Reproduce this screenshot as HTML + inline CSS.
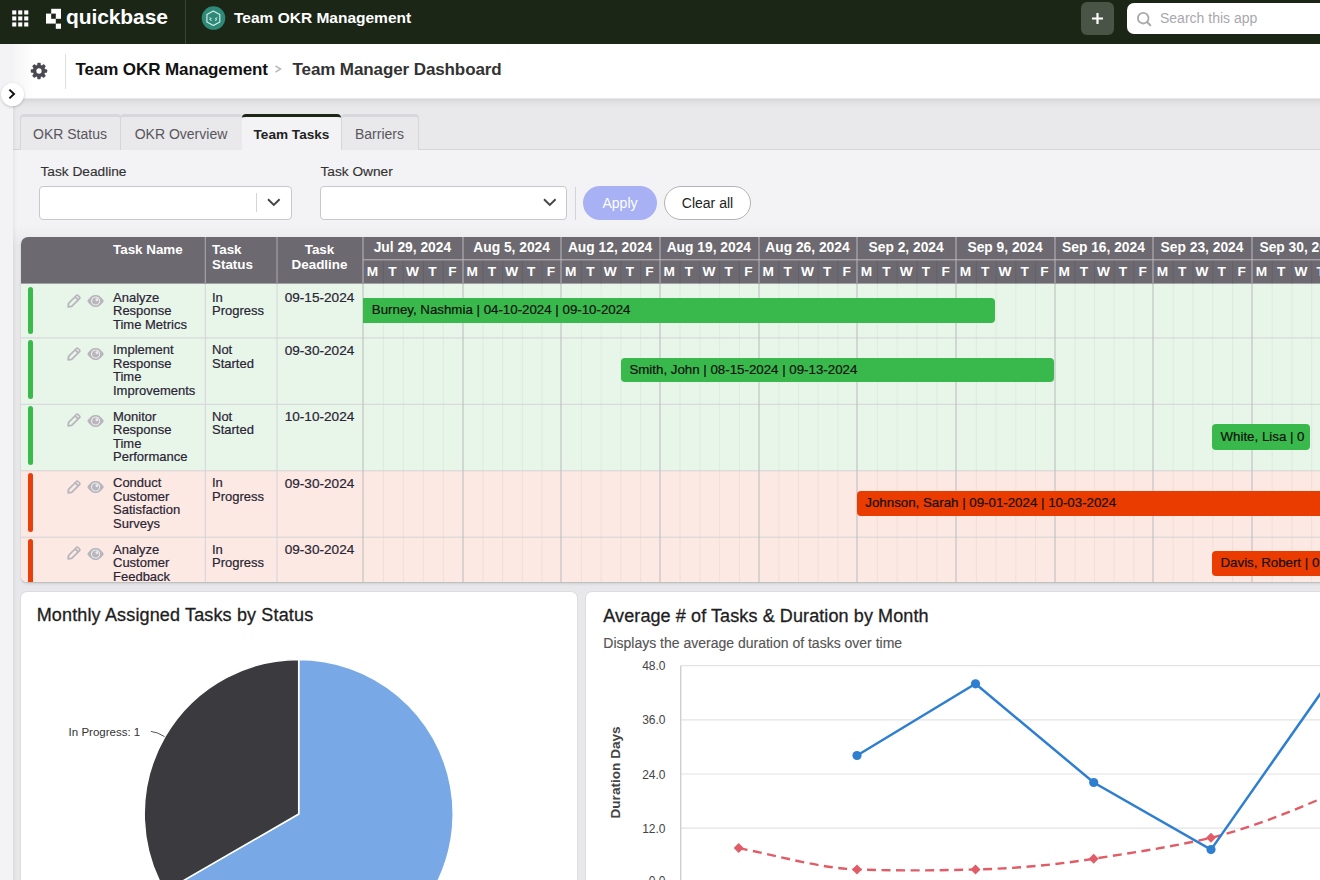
<!DOCTYPE html>
<html><head><meta charset="utf-8"><title>Team Manager Dashboard</title>
<style>
*{box-sizing:border-box}
html,body{margin:0;padding:0}
body{width:1320px;height:880px;overflow:hidden;position:relative;background:#f3f2f5;font-family:"Liberation Sans",sans-serif;color:#222}
.a{position:absolute}
.t{position:absolute;white-space:nowrap;line-height:1}
</style></head><body>

<div class="a" style="left:0;top:0;width:1320px;height:44px;background:#1c2617"></div>
<svg class="a" style="left:0;top:0" width="200" height="44" viewBox="0 0 200 44">
<rect x="12.2" y="10.4" width="4.1" height="4.1" fill="#fff"/>
<rect x="12.2" y="16.4" width="4.1" height="4.1" fill="#fff"/>
<rect x="12.2" y="22.4" width="4.1" height="4.1" fill="#fff"/>
<rect x="18.2" y="10.4" width="4.1" height="4.1" fill="#fff"/>
<rect x="18.2" y="16.4" width="4.1" height="4.1" fill="#fff"/>
<rect x="18.2" y="22.4" width="4.1" height="4.1" fill="#fff"/>
<rect x="24.2" y="10.4" width="4.1" height="4.1" fill="#fff"/>
<rect x="24.2" y="16.4" width="4.1" height="4.1" fill="#fff"/>
<rect x="24.2" y="22.4" width="4.1" height="4.1" fill="#fff"/>
<rect x="51.2" y="8.8" width="9.8" height="10" fill="#fff"/>
<rect x="46" y="13.6" width="9.8" height="10" fill="#fff"/>
<rect x="51.2" y="13.6" width="4.6" height="5.2" fill="#1c2617"/>
<rect x="55.8" y="23.6" width="5.2" height="5.2" fill="#fff"/>
</svg>
<div class="t" style="left:66px;top:6px;font-size:21px;font-weight:700;color:#fff;letter-spacing:-0.1px">quickbase</div>
<div class="a" style="left:185px;top:0;width:1px;height:44px;background:#3b4437"></div>
<svg class="a" style="left:201px;top:6px" width="25" height="25" viewBox="0 0 25 25">
<circle cx="12.5" cy="12.1" r="11.75" fill="#2e8a78"/>
<path d="M12.3 5 L18.8 8.6 L18.8 15.9 L12.3 19.5 L5.9 15.9 L5.9 8.6 Z" fill="none" stroke="#d9ede7" stroke-width="1.15" stroke-linejoin="round"/>
<path d="M8.3 11.6 L10.4 12.6 L8.6 13.5 L10.6 14.6 M16.3 11.6 L14.2 12.6 L16 13.5 L14 14.6" fill="none" stroke="#d9ede7" stroke-width="0.9"/>
</svg>
<div class="t" style="left:234px;top:10px;font-size:15.5px;font-weight:700;color:#fff">Team OKR Management</div>
<div class="a" style="left:1081px;top:2px;width:33px;height:33px;border-radius:6px;background:#4a5446"></div>
<svg class="a" style="left:1081px;top:2px" width="33" height="33" viewBox="0 0 33 33"><path d="M16.5 11 V22 M11 16.5 H22" stroke="#fff" stroke-width="2.2"/></svg>
<div class="a" style="left:1127px;top:3px;width:210px;height:31px;border-radius:7px;background:#fff"></div>
<svg class="a" style="left:1127px;top:3px" width="30" height="31" viewBox="0 0 30 31"><circle cx="16.2" cy="15.2" r="5.3" fill="none" stroke="#aaa9ae" stroke-width="1.8"/><path d="M20 19 L23.3 22.3" stroke="#aaa9ae" stroke-width="2" stroke-linecap="round"/></svg>
<div class="t" style="left:1160px;top:11px;font-size:14px;color:#a9a8ae">Search this app</div>
<div class="a" style="left:13px;top:44px;width:1307px;height:54.6px;background:#fff"></div>
<div class="a" style="left:13px;top:44px;width:22px;height:54px;background:linear-gradient(to right, rgba(0,0,0,0.045), rgba(0,0,0,0))"></div>
<svg class="a" style="left:29px;top:61px" width="20" height="20" viewBox="-10 -10 20 20"><g fill="#4b4952"><circle r="6.2"/><rect x="-1.75" y="-8.2" width="3.5" height="4.5" rx="0.9" transform="rotate(0)"/><rect x="-1.75" y="-8.2" width="3.5" height="4.5" rx="0.9" transform="rotate(45)"/><rect x="-1.75" y="-8.2" width="3.5" height="4.5" rx="0.9" transform="rotate(90)"/><rect x="-1.75" y="-8.2" width="3.5" height="4.5" rx="0.9" transform="rotate(135)"/><rect x="-1.75" y="-8.2" width="3.5" height="4.5" rx="0.9" transform="rotate(180)"/><rect x="-1.75" y="-8.2" width="3.5" height="4.5" rx="0.9" transform="rotate(225)"/><rect x="-1.75" y="-8.2" width="3.5" height="4.5" rx="0.9" transform="rotate(270)"/><rect x="-1.75" y="-8.2" width="3.5" height="4.5" rx="0.9" transform="rotate(315)"/></g><circle r="2.65" fill="#fff"/></svg>
<div class="a" style="left:65px;top:54px;width:1px;height:35px;background:#dedde0"></div>
<div class="t" style="left:75.5px;top:60.7px;font-size:17px;font-weight:700;color:#111;letter-spacing:-0.1px">Team OKR Management</div>
<svg class="a" style="left:274px;top:64px" width="10" height="10" viewBox="0 0 10 10"><path d="M1.5 1.8 L6.5 5 L1.5 8.2" fill="none" stroke="#b9b8bc" stroke-width="1.6"/></svg>
<div class="t" style="left:292.5px;top:60.7px;font-size:17px;font-weight:700;color:#333;letter-spacing:-0.1px">Team Manager Dashboard</div>
<div class="a" style="left:13px;top:98px;width:1307px;height:52px;background:#e9e8eb;border-bottom:1px solid #d6d5d9"></div>
<div class="a" style="left:13px;top:98.6px;width:1307px;height:9px;background:linear-gradient(to bottom,rgba(0,0,0,0.085),rgba(0,0,0,0.03) 40%,rgba(0,0,0,0))"></div>
<div class="a" style="left:20px;top:114px;width:101px;height:35.5px;background:#e9e8eb;border:1px solid #d6d5d9;border-bottom:none;border-top:3.5px solid #d8d7db;border-radius:4px 4px 0 0"></div>
<div class="t" style="left:20px;width:100px;text-align:center;top:126.5px;font-size:14px;color:#58565c">OKR Status</div>
<div class="a" style="left:120px;top:114px;width:123px;height:35.5px;background:#e9e8eb;border:1px solid #d6d5d9;border-bottom:none;border-top:3.5px solid #d8d7db;border-radius:4px 4px 0 0"></div>
<div class="t" style="left:120px;width:122px;text-align:center;top:126.5px;font-size:14px;color:#58565c">OKR Overview</div>
<div class="a" style="left:242px;top:114px;width:99px;height:36px;background:#f3f2f5;border-top:3.5px solid #1c2616;border-radius:4px 4px 0 0"></div>
<div class="t" style="left:242px;width:99px;text-align:center;top:127.5px;font-size:13.6px;font-weight:700;color:#222">Team Tasks</div>
<div class="a" style="left:341px;top:114px;width:78px;height:35.5px;background:#e9e8eb;border:1px solid #d6d5d9;border-bottom:none;border-top:3.5px solid #d8d7db;border-radius:4px 4px 0 0"></div>
<div class="t" style="left:341px;width:77px;text-align:center;top:126.5px;font-size:14px;color:#58565c">Barriers</div>
<div class="a" style="left:13px;top:150px;width:1307px;height:86px;background:#f3f2f5"></div>
<div class="t" style="left:40.5px;top:165px;font-size:13.7px;color:#333;-webkit-text-stroke:0.15px #333">Task Deadline</div>
<div class="t" style="left:320.5px;top:165px;font-size:13.7px;color:#333;-webkit-text-stroke:0.15px #333">Task Owner</div>
<div class="a" style="left:39px;top:186px;width:253px;height:34px;background:#fff;border:1px solid #c8c7cc;border-radius:4px"></div>
<div class="a" style="left:256px;top:193px;width:1px;height:19px;background:#d4d3d7"></div>
<svg class="a" style="left:266px;top:197px" width="16" height="10" viewBox="0 0 16 10"><path d="M2 2.3 L7.8 8 L13.6 2.3" fill="none" stroke="#444" stroke-width="1.9"/></svg>
<div class="a" style="left:320px;top:186px;width:247px;height:34px;background:#fff;border:1px solid #c8c7cc;border-radius:4px"></div>
<svg class="a" style="left:541.5px;top:197px" width="16" height="10" viewBox="0 0 16 10"><path d="M2 2.3 L7.8 8 L13.6 2.3" fill="none" stroke="#444" stroke-width="1.9"/></svg>
<div class="a" style="left:575px;top:187px;width:1px;height:33px;background:#d4d3d7"></div>
<div class="a" style="left:583px;top:186px;width:74px;height:34px;background:#a7b1f3;border-radius:17px"></div>
<div class="t" style="left:583px;width:74px;text-align:center;top:195.5px;font-size:14px;color:#fff">Apply</div>
<div class="a" style="left:664px;top:186px;width:87px;height:34px;background:#fff;border:1px solid #b3b3b6;border-radius:17px"></div>
<div class="t" style="left:664px;width:87px;text-align:center;top:195.5px;font-size:14px;color:#222">Clear all</div>
<div class="a" style="left:13px;top:224px;width:1307px;height:656px;background:linear-gradient(to bottom,#f3f2f5 0px,#eeedf0 12px,#e8e7ea 22px,#e8e7ea 100%)"></div>
<div class="a" style="left:13px;top:98px;width:4px;height:782px;background:linear-gradient(to right,rgba(0,0,0,0.05),rgba(0,0,0,0))"></div>
<div class="a" style="left:20.5px;top:236.5px;width:1320px;height:345.5px;overflow:hidden;border-radius:7px 0 0 6px;box-shadow:0 1px 1px rgba(0,0,0,0.10), 0 2px 3px rgba(0,0,0,0.10);background:#fff">
<div class="a" style="left:0;top:0;width:1320px;height:46.7px;background:#6c6970"></div>
<div class="a" style="left:0;top:46.7px;width:1320px;height:54.7px;background:#e8f6ea"></div>
<div class="a" style="left:0;top:100.9px;width:1320px;height:66.9px;background:#e8f6ea"></div>
<div class="a" style="left:0;top:167.3px;width:1320px;height:67px;background:#e8f6ea"></div>
<div class="a" style="left:0;top:233.8px;width:1320px;height:66.9px;background:#fde9e3"></div>
<div class="a" style="left:0;top:300.2px;width:1320px;height:54.3px;background:#fde9e3"></div>
<svg class="a" style="left:0;top:0" width="1320" height="346" viewBox="20.5 236.5 1320 346"><rect x="382.34" y="283.2" width="1" height="320" fill="rgba(90,100,95,0.075)"/><rect x="402.33" y="283.2" width="1" height="320" fill="rgba(90,100,95,0.075)"/><rect x="422.32" y="283.2" width="1" height="320" fill="rgba(90,100,95,0.075)"/><rect x="442.31" y="283.2" width="1" height="320" fill="rgba(90,100,95,0.075)"/><rect x="481.98" y="283.2" width="1" height="320" fill="rgba(90,100,95,0.075)"/><rect x="501.66" y="283.2" width="1" height="320" fill="rgba(90,100,95,0.075)"/><rect x="521.34" y="283.2" width="1" height="320" fill="rgba(90,100,95,0.075)"/><rect x="541.02" y="283.2" width="1" height="320" fill="rgba(90,100,95,0.075)"/><rect x="580.42" y="283.2" width="1" height="320" fill="rgba(90,100,95,0.075)"/><rect x="600.14" y="283.2" width="1" height="320" fill="rgba(90,100,95,0.075)"/><rect x="619.86" y="283.2" width="1" height="320" fill="rgba(90,100,95,0.075)"/><rect x="639.58" y="283.2" width="1" height="320" fill="rgba(90,100,95,0.075)"/><rect x="679.08" y="283.2" width="1" height="320" fill="rgba(90,100,95,0.075)"/><rect x="698.86" y="283.2" width="1" height="320" fill="rgba(90,100,95,0.075)"/><rect x="718.64" y="283.2" width="1" height="320" fill="rgba(90,100,95,0.075)"/><rect x="738.42" y="283.2" width="1" height="320" fill="rgba(90,100,95,0.075)"/><rect x="777.86" y="283.2" width="1" height="320" fill="rgba(90,100,95,0.075)"/><rect x="797.52" y="283.2" width="1" height="320" fill="rgba(90,100,95,0.075)"/><rect x="817.18" y="283.2" width="1" height="320" fill="rgba(90,100,95,0.075)"/><rect x="836.84" y="283.2" width="1" height="320" fill="rgba(90,100,95,0.075)"/><rect x="876.32" y="283.2" width="1" height="320" fill="rgba(90,100,95,0.075)"/><rect x="896.14" y="283.2" width="1" height="320" fill="rgba(90,100,95,0.075)"/><rect x="915.96" y="283.2" width="1" height="320" fill="rgba(90,100,95,0.075)"/><rect x="935.78" y="283.2" width="1" height="320" fill="rgba(90,100,95,0.075)"/><rect x="975.34" y="283.2" width="1" height="320" fill="rgba(90,100,95,0.075)"/><rect x="995.08" y="283.2" width="1" height="320" fill="rgba(90,100,95,0.075)"/><rect x="1014.82" y="283.2" width="1" height="320" fill="rgba(90,100,95,0.075)"/><rect x="1034.56" y="283.2" width="1" height="320" fill="rgba(90,100,95,0.075)"/><rect x="1073.92" y="283.2" width="1" height="320" fill="rgba(90,100,95,0.075)"/><rect x="1093.54" y="283.2" width="1" height="320" fill="rgba(90,100,95,0.075)"/><rect x="1113.16" y="283.2" width="1" height="320" fill="rgba(90,100,95,0.075)"/><rect x="1132.78" y="283.2" width="1" height="320" fill="rgba(90,100,95,0.075)"/><rect x="1172.2" y="283.2" width="1" height="320" fill="rgba(90,100,95,0.075)"/><rect x="1192" y="283.2" width="1" height="320" fill="rgba(90,100,95,0.075)"/><rect x="1211.8" y="283.2" width="1" height="320" fill="rgba(90,100,95,0.075)"/><rect x="1231.6" y="283.2" width="1" height="320" fill="rgba(90,100,95,0.075)"/><rect x="1271.16" y="283.2" width="1" height="320" fill="rgba(90,100,95,0.075)"/><rect x="1290.92" y="283.2" width="1" height="320" fill="rgba(90,100,95,0.075)"/><rect x="1310.68" y="283.2" width="1" height="320" fill="rgba(90,100,95,0.075)"/><rect x="1330.44" y="283.2" width="1" height="320" fill="rgba(90,100,95,0.075)"/><rect x="20.5" y="336.9" width="1320" height="1" fill="#d4d3d7"/><rect x="20.5" y="403.3" width="1320" height="1" fill="#d4d3d7"/><rect x="20.5" y="469.8" width="1320" height="1" fill="#d4d3d7"/><rect x="20.5" y="536.2" width="1320" height="1" fill="#d4d3d7"/><rect x="20.5" y="590" width="1320" height="1" fill="#d4d3d7"/><rect x="362" y="283.2" width="1" height="320" fill="#bab9bd"/><rect x="462" y="283.2" width="1" height="320" fill="#bab9bd"/><rect x="560" y="283.2" width="1" height="320" fill="#bab9bd"/><rect x="659" y="283.2" width="1" height="320" fill="#bab9bd"/><rect x="758" y="283.2" width="1" height="320" fill="#bab9bd"/><rect x="856" y="283.2" width="1" height="320" fill="#bab9bd"/><rect x="955" y="283.2" width="1" height="320" fill="#bab9bd"/><rect x="1054" y="283.2" width="1" height="320" fill="#bab9bd"/><rect x="1152" y="283.2" width="1" height="320" fill="#bab9bd"/><rect x="1251" y="283.2" width="1" height="320" fill="#bab9bd"/><rect x="1350" y="283.2" width="1" height="320" fill="#bab9bd"/><rect x="204.3" y="283.2" width="1" height="320" fill="#d4d3d7"/><rect x="276" y="283.2" width="1" height="320" fill="#d4d3d7"/><rect x="204.25" y="236.5" width="1.1" height="46.7" fill="#a9a7ad"/><rect x="275.95" y="236.5" width="1.1" height="46.7" fill="#a9a7ad"/><rect x="362" y="236.5" width="1" height="46.7" fill="#b9b7bd"/><rect x="382.34" y="259.9" width="1" height="23.3" fill="#646168"/><rect x="402.33" y="259.9" width="1" height="23.3" fill="#646168"/><rect x="422.32" y="259.9" width="1" height="23.3" fill="#646168"/><rect x="442.31" y="259.9" width="1" height="23.3" fill="#646168"/><rect x="462" y="236.5" width="1" height="46.7" fill="#b9b7bd"/><rect x="481.98" y="259.9" width="1" height="23.3" fill="#646168"/><rect x="501.66" y="259.9" width="1" height="23.3" fill="#646168"/><rect x="521.34" y="259.9" width="1" height="23.3" fill="#646168"/><rect x="541.02" y="259.9" width="1" height="23.3" fill="#646168"/><rect x="560" y="236.5" width="1" height="46.7" fill="#b9b7bd"/><rect x="580.42" y="259.9" width="1" height="23.3" fill="#646168"/><rect x="600.14" y="259.9" width="1" height="23.3" fill="#646168"/><rect x="619.86" y="259.9" width="1" height="23.3" fill="#646168"/><rect x="639.58" y="259.9" width="1" height="23.3" fill="#646168"/><rect x="659" y="236.5" width="1" height="46.7" fill="#b9b7bd"/><rect x="679.08" y="259.9" width="1" height="23.3" fill="#646168"/><rect x="698.86" y="259.9" width="1" height="23.3" fill="#646168"/><rect x="718.64" y="259.9" width="1" height="23.3" fill="#646168"/><rect x="738.42" y="259.9" width="1" height="23.3" fill="#646168"/><rect x="758" y="236.5" width="1" height="46.7" fill="#b9b7bd"/><rect x="777.86" y="259.9" width="1" height="23.3" fill="#646168"/><rect x="797.52" y="259.9" width="1" height="23.3" fill="#646168"/><rect x="817.18" y="259.9" width="1" height="23.3" fill="#646168"/><rect x="836.84" y="259.9" width="1" height="23.3" fill="#646168"/><rect x="856" y="236.5" width="1" height="46.7" fill="#b9b7bd"/><rect x="876.32" y="259.9" width="1" height="23.3" fill="#646168"/><rect x="896.14" y="259.9" width="1" height="23.3" fill="#646168"/><rect x="915.96" y="259.9" width="1" height="23.3" fill="#646168"/><rect x="935.78" y="259.9" width="1" height="23.3" fill="#646168"/><rect x="955" y="236.5" width="1" height="46.7" fill="#b9b7bd"/><rect x="975.34" y="259.9" width="1" height="23.3" fill="#646168"/><rect x="995.08" y="259.9" width="1" height="23.3" fill="#646168"/><rect x="1014.82" y="259.9" width="1" height="23.3" fill="#646168"/><rect x="1034.56" y="259.9" width="1" height="23.3" fill="#646168"/><rect x="1054" y="236.5" width="1" height="46.7" fill="#b9b7bd"/><rect x="1073.92" y="259.9" width="1" height="23.3" fill="#646168"/><rect x="1093.54" y="259.9" width="1" height="23.3" fill="#646168"/><rect x="1113.16" y="259.9" width="1" height="23.3" fill="#646168"/><rect x="1132.78" y="259.9" width="1" height="23.3" fill="#646168"/><rect x="1152" y="236.5" width="1" height="46.7" fill="#b9b7bd"/><rect x="1172.2" y="259.9" width="1" height="23.3" fill="#646168"/><rect x="1192" y="259.9" width="1" height="23.3" fill="#646168"/><rect x="1211.8" y="259.9" width="1" height="23.3" fill="#646168"/><rect x="1231.6" y="259.9" width="1" height="23.3" fill="#646168"/><rect x="1251" y="236.5" width="1" height="46.7" fill="#b9b7bd"/><rect x="1271.16" y="259.9" width="1" height="23.3" fill="#646168"/><rect x="1290.92" y="259.9" width="1" height="23.3" fill="#646168"/><rect x="1310.68" y="259.9" width="1" height="23.3" fill="#646168"/><rect x="1330.44" y="259.9" width="1" height="23.3" fill="#646168"/><rect x="362.5" y="258.8" width="1000" height="1" fill="#b9b7bd"/><rect x="20.5" y="282.6" width="1320" height="0.8" fill="#8f8d94"/></svg>
<div class="t" style="left:341.95px;width:99.95px;text-align:center;top:4.6px;font-size:13.8px;font-weight:700;color:#fff">Jul 29, 2024</div>
<div class="t" style="left:341.95px;width:19.99px;text-align:center;top:28.6px;font-size:13.7px;font-weight:700;color:#fff">M</div>
<div class="t" style="left:361.94px;width:19.99px;text-align:center;top:28.6px;font-size:13.7px;font-weight:700;color:#fff">T</div>
<div class="t" style="left:381.93px;width:19.99px;text-align:center;top:28.6px;font-size:13.7px;font-weight:700;color:#fff">W</div>
<div class="t" style="left:401.92px;width:19.99px;text-align:center;top:28.6px;font-size:13.7px;font-weight:700;color:#fff">T</div>
<div class="t" style="left:421.91px;width:19.99px;text-align:center;top:28.6px;font-size:13.7px;font-weight:700;color:#fff">F</div>
<div class="t" style="left:441.9px;width:98.4px;text-align:center;top:4.6px;font-size:13.8px;font-weight:700;color:#fff">Aug 5, 2024</div>
<div class="t" style="left:441.9px;width:19.68px;text-align:center;top:28.6px;font-size:13.7px;font-weight:700;color:#fff">M</div>
<div class="t" style="left:461.58px;width:19.68px;text-align:center;top:28.6px;font-size:13.7px;font-weight:700;color:#fff">T</div>
<div class="t" style="left:481.26px;width:19.68px;text-align:center;top:28.6px;font-size:13.7px;font-weight:700;color:#fff">W</div>
<div class="t" style="left:500.94px;width:19.68px;text-align:center;top:28.6px;font-size:13.7px;font-weight:700;color:#fff">T</div>
<div class="t" style="left:520.62px;width:19.68px;text-align:center;top:28.6px;font-size:13.7px;font-weight:700;color:#fff">F</div>
<div class="t" style="left:540.3px;width:98.6px;text-align:center;top:4.6px;font-size:13.8px;font-weight:700;color:#fff">Aug 12, 2024</div>
<div class="t" style="left:540.3px;width:19.72px;text-align:center;top:28.6px;font-size:13.7px;font-weight:700;color:#fff">M</div>
<div class="t" style="left:560.02px;width:19.72px;text-align:center;top:28.6px;font-size:13.7px;font-weight:700;color:#fff">T</div>
<div class="t" style="left:579.74px;width:19.72px;text-align:center;top:28.6px;font-size:13.7px;font-weight:700;color:#fff">W</div>
<div class="t" style="left:599.46px;width:19.72px;text-align:center;top:28.6px;font-size:13.7px;font-weight:700;color:#fff">T</div>
<div class="t" style="left:619.18px;width:19.72px;text-align:center;top:28.6px;font-size:13.7px;font-weight:700;color:#fff">F</div>
<div class="t" style="left:638.9px;width:98.9px;text-align:center;top:4.6px;font-size:13.8px;font-weight:700;color:#fff">Aug 19, 2024</div>
<div class="t" style="left:638.9px;width:19.78px;text-align:center;top:28.6px;font-size:13.7px;font-weight:700;color:#fff">M</div>
<div class="t" style="left:658.68px;width:19.78px;text-align:center;top:28.6px;font-size:13.7px;font-weight:700;color:#fff">T</div>
<div class="t" style="left:678.46px;width:19.78px;text-align:center;top:28.6px;font-size:13.7px;font-weight:700;color:#fff">W</div>
<div class="t" style="left:698.24px;width:19.78px;text-align:center;top:28.6px;font-size:13.7px;font-weight:700;color:#fff">T</div>
<div class="t" style="left:718.02px;width:19.78px;text-align:center;top:28.6px;font-size:13.7px;font-weight:700;color:#fff">F</div>
<div class="t" style="left:737.8px;width:98.3px;text-align:center;top:4.6px;font-size:13.8px;font-weight:700;color:#fff">Aug 26, 2024</div>
<div class="t" style="left:737.8px;width:19.66px;text-align:center;top:28.6px;font-size:13.7px;font-weight:700;color:#fff">M</div>
<div class="t" style="left:757.46px;width:19.66px;text-align:center;top:28.6px;font-size:13.7px;font-weight:700;color:#fff">T</div>
<div class="t" style="left:777.12px;width:19.66px;text-align:center;top:28.6px;font-size:13.7px;font-weight:700;color:#fff">W</div>
<div class="t" style="left:796.78px;width:19.66px;text-align:center;top:28.6px;font-size:13.7px;font-weight:700;color:#fff">T</div>
<div class="t" style="left:816.44px;width:19.66px;text-align:center;top:28.6px;font-size:13.7px;font-weight:700;color:#fff">F</div>
<div class="t" style="left:836.1px;width:99.1px;text-align:center;top:4.6px;font-size:13.8px;font-weight:700;color:#fff">Sep 2, 2024</div>
<div class="t" style="left:836.1px;width:19.82px;text-align:center;top:28.6px;font-size:13.7px;font-weight:700;color:#fff">M</div>
<div class="t" style="left:855.92px;width:19.82px;text-align:center;top:28.6px;font-size:13.7px;font-weight:700;color:#fff">T</div>
<div class="t" style="left:875.74px;width:19.82px;text-align:center;top:28.6px;font-size:13.7px;font-weight:700;color:#fff">W</div>
<div class="t" style="left:895.56px;width:19.82px;text-align:center;top:28.6px;font-size:13.7px;font-weight:700;color:#fff">T</div>
<div class="t" style="left:915.38px;width:19.82px;text-align:center;top:28.6px;font-size:13.7px;font-weight:700;color:#fff">F</div>
<div class="t" style="left:935.2px;width:98.7px;text-align:center;top:4.6px;font-size:13.8px;font-weight:700;color:#fff">Sep 9, 2024</div>
<div class="t" style="left:935.2px;width:19.74px;text-align:center;top:28.6px;font-size:13.7px;font-weight:700;color:#fff">M</div>
<div class="t" style="left:954.94px;width:19.74px;text-align:center;top:28.6px;font-size:13.7px;font-weight:700;color:#fff">T</div>
<div class="t" style="left:974.68px;width:19.74px;text-align:center;top:28.6px;font-size:13.7px;font-weight:700;color:#fff">W</div>
<div class="t" style="left:994.42px;width:19.74px;text-align:center;top:28.6px;font-size:13.7px;font-weight:700;color:#fff">T</div>
<div class="t" style="left:1014.16px;width:19.74px;text-align:center;top:28.6px;font-size:13.7px;font-weight:700;color:#fff">F</div>
<div class="t" style="left:1033.9px;width:98.1px;text-align:center;top:4.6px;font-size:13.8px;font-weight:700;color:#fff">Sep 16, 2024</div>
<div class="t" style="left:1033.9px;width:19.62px;text-align:center;top:28.6px;font-size:13.7px;font-weight:700;color:#fff">M</div>
<div class="t" style="left:1053.52px;width:19.62px;text-align:center;top:28.6px;font-size:13.7px;font-weight:700;color:#fff">T</div>
<div class="t" style="left:1073.14px;width:19.62px;text-align:center;top:28.6px;font-size:13.7px;font-weight:700;color:#fff">W</div>
<div class="t" style="left:1092.76px;width:19.62px;text-align:center;top:28.6px;font-size:13.7px;font-weight:700;color:#fff">T</div>
<div class="t" style="left:1112.38px;width:19.62px;text-align:center;top:28.6px;font-size:13.7px;font-weight:700;color:#fff">F</div>
<div class="t" style="left:1132px;width:99px;text-align:center;top:4.6px;font-size:13.8px;font-weight:700;color:#fff">Sep 23, 2024</div>
<div class="t" style="left:1132px;width:19.8px;text-align:center;top:28.6px;font-size:13.7px;font-weight:700;color:#fff">M</div>
<div class="t" style="left:1151.8px;width:19.8px;text-align:center;top:28.6px;font-size:13.7px;font-weight:700;color:#fff">T</div>
<div class="t" style="left:1171.6px;width:19.8px;text-align:center;top:28.6px;font-size:13.7px;font-weight:700;color:#fff">W</div>
<div class="t" style="left:1191.4px;width:19.8px;text-align:center;top:28.6px;font-size:13.7px;font-weight:700;color:#fff">T</div>
<div class="t" style="left:1211.2px;width:19.8px;text-align:center;top:28.6px;font-size:13.7px;font-weight:700;color:#fff">F</div>
<div class="t" style="left:1231px;width:98.8px;text-align:center;top:4.6px;font-size:13.8px;font-weight:700;color:#fff">Sep 30, 2024</div>
<div class="t" style="left:1231px;width:19.76px;text-align:center;top:28.6px;font-size:13.7px;font-weight:700;color:#fff">M</div>
<div class="t" style="left:1250.76px;width:19.76px;text-align:center;top:28.6px;font-size:13.7px;font-weight:700;color:#fff">T</div>
<div class="t" style="left:1270.52px;width:19.76px;text-align:center;top:28.6px;font-size:13.7px;font-weight:700;color:#fff">W</div>
<div class="t" style="left:1290.28px;width:19.76px;text-align:center;top:28.6px;font-size:13.7px;font-weight:700;color:#fff">T</div>
<div class="t" style="left:1310.04px;width:19.76px;text-align:center;top:28.6px;font-size:13.7px;font-weight:700;color:#fff">F</div>
<div class="t" style="left:92.5px;top:6.2px;font-size:13.4px;font-weight:700;color:#fff">Task Name</div>
<div class="t" style="left:191.5px;top:5.5px;font-size:13.4px;font-weight:700;color:#fff;line-height:15px;white-space:normal">Task<br>Status</div>
<div class="t" style="left:256px;width:86px;text-align:center;top:5.5px;font-size:13.4px;font-weight:700;color:#fff;line-height:15px;white-space:normal">Task<br>Deadline</div>
<div class="a" style="left:7.5px;top:50.2px;width:5.2px;height:46.9px;border-radius:2.6px;background:#3bba4c"></div>
<svg class="a" style="left:46.6px;top:57.6px" width="14" height="14" viewBox="0 0 14 14"><path d="M1.1 12.9 L1.6 9.3 L9.4 1.5 Q10.2 0.8 11 1.5 L12.5 3 Q13.2 3.8 12.5 4.6 L4.7 12.4 Z M8.1 2.8 L11.2 5.9" fill="none" stroke="#b8b6bc" stroke-width="1.75" stroke-linejoin="round"/></svg>
<svg class="a" style="left:66.8px;top:58.8px" width="17.2" height="12" viewBox="0 0 17.2 12"><path d="M0.3 6 C3.4 1 6 0 8.6 0 C11.2 0 13.8 1 16.9 6 C13.8 11 11.2 12 8.6 12 C6 12 3.4 11 0.3 6 Z" fill="#b8b6bc"/><circle cx="8.6" cy="6" r="4.05" fill="none" stroke="rgba(255,255,255,0.72)" stroke-width="1.1"/><circle cx="8.6" cy="6.1" r="2.75" fill="#b8b6bc"/><circle cx="9.9" cy="4.8" r="1.45" fill="rgba(255,255,255,0.72)"/></svg>
<div class="t" style="left:92.5px;top:54px;font-size:13px;line-height:13.5px;color:#2a2434;-webkit-text-stroke:0.2px #2a2434;white-space:normal">Analyze<br>Response<br>Time Metrics</div>
<div class="t" style="left:191.5px;top:54px;font-size:13px;line-height:13.5px;color:#2a2434;-webkit-text-stroke:0.2px #2a2434;white-space:normal">In<br>Progress</div>
<div class="t" style="left:256px;width:86px;text-align:center;top:54.2px;font-size:13.6px;line-height:13.5px;color:#2a2434;-webkit-text-stroke:0.2px #2a2434">09-15-2024</div>
<div class="a" style="left:7.5px;top:103.1px;width:5.2px;height:59.1px;border-radius:2.6px;background:#3bba4c"></div>
<svg class="a" style="left:46.6px;top:110.5px" width="14" height="14" viewBox="0 0 14 14"><path d="M1.1 12.9 L1.6 9.3 L9.4 1.5 Q10.2 0.8 11 1.5 L12.5 3 Q13.2 3.8 12.5 4.6 L4.7 12.4 Z M8.1 2.8 L11.2 5.9" fill="none" stroke="#b8b6bc" stroke-width="1.75" stroke-linejoin="round"/></svg>
<svg class="a" style="left:66.8px;top:111.7px" width="17.2" height="12" viewBox="0 0 17.2 12"><path d="M0.3 6 C3.4 1 6 0 8.6 0 C11.2 0 13.8 1 16.9 6 C13.8 11 11.2 12 8.6 12 C6 12 3.4 11 0.3 6 Z" fill="#b8b6bc"/><circle cx="8.6" cy="6" r="4.05" fill="none" stroke="rgba(255,255,255,0.72)" stroke-width="1.1"/><circle cx="8.6" cy="6.1" r="2.75" fill="#b8b6bc"/><circle cx="9.9" cy="4.8" r="1.45" fill="rgba(255,255,255,0.72)"/></svg>
<div class="t" style="left:92.5px;top:106.9px;font-size:13px;line-height:13.5px;color:#2a2434;-webkit-text-stroke:0.2px #2a2434;white-space:normal">Implement<br>Response<br>Time<br>Improvements</div>
<div class="t" style="left:191.5px;top:106.9px;font-size:13px;line-height:13.5px;color:#2a2434;-webkit-text-stroke:0.2px #2a2434;white-space:normal">Not<br>Started</div>
<div class="t" style="left:256px;width:86px;text-align:center;top:107.1px;font-size:13.6px;line-height:13.5px;color:#2a2434;-webkit-text-stroke:0.2px #2a2434">09-30-2024</div>
<div class="a" style="left:7.5px;top:169.5px;width:5.2px;height:59.2px;border-radius:2.6px;background:#3bba4c"></div>
<svg class="a" style="left:46.6px;top:176.9px" width="14" height="14" viewBox="0 0 14 14"><path d="M1.1 12.9 L1.6 9.3 L9.4 1.5 Q10.2 0.8 11 1.5 L12.5 3 Q13.2 3.8 12.5 4.6 L4.7 12.4 Z M8.1 2.8 L11.2 5.9" fill="none" stroke="#b8b6bc" stroke-width="1.75" stroke-linejoin="round"/></svg>
<svg class="a" style="left:66.8px;top:178.1px" width="17.2" height="12" viewBox="0 0 17.2 12"><path d="M0.3 6 C3.4 1 6 0 8.6 0 C11.2 0 13.8 1 16.9 6 C13.8 11 11.2 12 8.6 12 C6 12 3.4 11 0.3 6 Z" fill="#b8b6bc"/><circle cx="8.6" cy="6" r="4.05" fill="none" stroke="rgba(255,255,255,0.72)" stroke-width="1.1"/><circle cx="8.6" cy="6.1" r="2.75" fill="#b8b6bc"/><circle cx="9.9" cy="4.8" r="1.45" fill="rgba(255,255,255,0.72)"/></svg>
<div class="t" style="left:92.5px;top:173.3px;font-size:13px;line-height:13.5px;color:#2a2434;-webkit-text-stroke:0.2px #2a2434;white-space:normal">Monitor<br>Response<br>Time<br>Performance</div>
<div class="t" style="left:191.5px;top:173.3px;font-size:13px;line-height:13.5px;color:#2a2434;-webkit-text-stroke:0.2px #2a2434;white-space:normal">Not<br>Started</div>
<div class="t" style="left:256px;width:86px;text-align:center;top:173.5px;font-size:13.6px;line-height:13.5px;color:#2a2434;-webkit-text-stroke:0.2px #2a2434">10-10-2024</div>
<div class="a" style="left:7.5px;top:236px;width:5.2px;height:59.1px;border-radius:2.6px;background:#ea3f0b"></div>
<svg class="a" style="left:46.6px;top:243.4px" width="14" height="14" viewBox="0 0 14 14"><path d="M1.1 12.9 L1.6 9.3 L9.4 1.5 Q10.2 0.8 11 1.5 L12.5 3 Q13.2 3.8 12.5 4.6 L4.7 12.4 Z M8.1 2.8 L11.2 5.9" fill="none" stroke="#b8b6bc" stroke-width="1.75" stroke-linejoin="round"/></svg>
<svg class="a" style="left:66.8px;top:244.6px" width="17.2" height="12" viewBox="0 0 17.2 12"><path d="M0.3 6 C3.4 1 6 0 8.6 0 C11.2 0 13.8 1 16.9 6 C13.8 11 11.2 12 8.6 12 C6 12 3.4 11 0.3 6 Z" fill="#b8b6bc"/><circle cx="8.6" cy="6" r="4.05" fill="none" stroke="rgba(255,255,255,0.72)" stroke-width="1.1"/><circle cx="8.6" cy="6.1" r="2.75" fill="#b8b6bc"/><circle cx="9.9" cy="4.8" r="1.45" fill="rgba(255,255,255,0.72)"/></svg>
<div class="t" style="left:92.5px;top:239.8px;font-size:13px;line-height:13.5px;color:#2a2434;-webkit-text-stroke:0.2px #2a2434;white-space:normal">Conduct<br>Customer<br>Satisfaction<br>Surveys</div>
<div class="t" style="left:191.5px;top:239.8px;font-size:13px;line-height:13.5px;color:#2a2434;-webkit-text-stroke:0.2px #2a2434;white-space:normal">In<br>Progress</div>
<div class="t" style="left:256px;width:86px;text-align:center;top:240px;font-size:13.6px;line-height:13.5px;color:#2a2434;-webkit-text-stroke:0.2px #2a2434">09-30-2024</div>
<div class="a" style="left:7.5px;top:302.4px;width:5.2px;height:46.5px;border-radius:2.6px;background:#ea3f0b"></div>
<svg class="a" style="left:46.6px;top:309.8px" width="14" height="14" viewBox="0 0 14 14"><path d="M1.1 12.9 L1.6 9.3 L9.4 1.5 Q10.2 0.8 11 1.5 L12.5 3 Q13.2 3.8 12.5 4.6 L4.7 12.4 Z M8.1 2.8 L11.2 5.9" fill="none" stroke="#b8b6bc" stroke-width="1.75" stroke-linejoin="round"/></svg>
<svg class="a" style="left:66.8px;top:311px" width="17.2" height="12" viewBox="0 0 17.2 12"><path d="M0.3 6 C3.4 1 6 0 8.6 0 C11.2 0 13.8 1 16.9 6 C13.8 11 11.2 12 8.6 12 C6 12 3.4 11 0.3 6 Z" fill="#b8b6bc"/><circle cx="8.6" cy="6" r="4.05" fill="none" stroke="rgba(255,255,255,0.72)" stroke-width="1.1"/><circle cx="8.6" cy="6.1" r="2.75" fill="#b8b6bc"/><circle cx="9.9" cy="4.8" r="1.45" fill="rgba(255,255,255,0.72)"/></svg>
<div class="t" style="left:92.5px;top:306.2px;font-size:13px;line-height:13.5px;color:#2a2434;-webkit-text-stroke:0.2px #2a2434;white-space:normal">Analyze<br>Customer<br>Feedback</div>
<div class="t" style="left:191.5px;top:306.2px;font-size:13px;line-height:13.5px;color:#2a2434;-webkit-text-stroke:0.2px #2a2434;white-space:normal">In<br>Progress</div>
<div class="t" style="left:256px;width:86px;text-align:center;top:306.4px;font-size:13.6px;line-height:13.5px;color:#2a2434;-webkit-text-stroke:0.2px #2a2434">09-30-2024</div>
<div class="a" style="left:342.5px;top:61.1px;width:631.8px;height:25.8px;background:#39b94b;border-radius:0 4px 4px 0"></div>
<div class="t" style="left:351.3px;top:66.6px;font-size:13.3px;color:#111;-webkit-text-stroke:0.2px #111">Burney, Nashmia &#124; 04-10-2024 &#124; 09-10-2024</div>
<div class="a" style="left:600.1px;top:121.3px;width:433.6px;height:24.6px;background:#39b94b;border-radius:4px"></div>
<div class="t" style="left:608.9px;top:126.8px;font-size:13.3px;color:#111;-webkit-text-stroke:0.2px #111">Smith, John &#124; 08-15-2024 &#124; 09-13-2024</div>
<div class="a" style="left:1191.2px;top:187.8px;width:98.1px;height:25.5px;background:#39b94b;border-radius:4px"></div>
<div class="t" style="left:1200px;top:193.3px;font-size:13.3px;color:#111;-webkit-text-stroke:0.2px #111">White, Lisa &#124; 0</div>
<div class="a" style="left:836px;top:254.2px;width:543.5px;height:25.7px;background:#ea3c00;border-radius:4px"></div>
<div class="t" style="left:844.8px;top:259.7px;font-size:13.3px;color:#111;-webkit-text-stroke:0.2px #111">Johnson, Sarah &#124; 09-01-2024 &#124; 10-03-2024</div>
<div class="a" style="left:1191.2px;top:314.4px;width:188.3px;height:25.5px;background:#ea3c00;border-radius:4px"></div>
<div class="t" style="left:1200px;top:319.9px;font-size:13.3px;color:#111;-webkit-text-stroke:0.2px #111">Davis, Robert &#124; 09-25-2024 &#124; 10-15-2024</div>
</div>
<div class="a" style="left:20.8px;top:591.8px;width:556.3px;height:400px;background:#fff;border-radius:6px;box-shadow:0 0 0 1px #dddce0, 0 1px 2px rgba(0,0,0,0.08)"></div>
<div class="a" style="left:586.2px;top:591.8px;width:800px;height:400px;background:#fff;border-radius:6px;box-shadow:0 0 0 1px #dddce0, 0 1px 2px rgba(0,0,0,0.08)"></div>
<div class="t" style="left:36.7px;top:606.2px;font-size:18px;color:#1e1e1e;letter-spacing:0.15px;-webkit-text-stroke:0.3px #1e1e1e">Monthly Assigned Tasks by Status</div>
<div class="t" style="left:603.3px;top:606.5px;font-size:18px;color:#1e1e1e;letter-spacing:0.1px;-webkit-text-stroke:0.3px #1e1e1e">Average # of Tasks &amp; Duration by Month</div>
<div class="t" style="left:603.3px;top:636px;font-size:14px;color:#555;-webkit-text-stroke:0.15px #555">Displays the average duration of tasks over time</div>
<svg class="a" style="left:0;top:0" width="580" height="880" viewBox="0 0 580 880">
<path d="M298.7 814.0 L298.7 659.5 A154.5 154.5 0 1 1 164.9 891.25 Z" fill="#78a9e6" stroke="#fff" stroke-width="1.5" stroke-linejoin="round"/>
<path d="M298.7 814.0 L164.9 891.25 A154.5 154.5 0 0 1 298.7 659.5 Z" fill="#3b3a3f" stroke="#fff" stroke-width="1.5" stroke-linejoin="round"/>
<path d="M150.9 731.4 Q158 732.2 164.5 736.6" fill="none" stroke="#555" stroke-width="1"/>
</svg>
<div class="t" style="left:68.6px;top:727px;font-size:11.5px;color:#333">In Progress: 1</div>
<svg class="a" style="left:0;top:0" width="1320" height="880" viewBox="0 0 1320 880"><path d="M680.7 665.7 H1320" stroke="#e3e3e5" stroke-width="1.2"/><path d="M680.7 719.9 H1320" stroke="#e3e3e5" stroke-width="1.2"/><path d="M680.7 774.0 H1320" stroke="#e3e3e5" stroke-width="1.2"/><path d="M680.7 828.1 H1320" stroke="#e3e3e5" stroke-width="1.2"/><path d="M680.7 882.2 H1320" stroke="#e3e3e5" stroke-width="1.2"/><path d="M680.7 665.7 V880" stroke="#cfcfd3" stroke-width="1.4"/><path d="M738.7 848.1 C778 855.5 818 868 857 869.5 C896 870.8 936 870.5 975.5 869.5 C1015 868.5 1054 865 1093.7 858.8 C1133 852.5 1172 847 1211 837.7 C1251 828 1290 812 1329.5 795" fill="none" stroke="#e15c66" stroke-width="2.4" stroke-dasharray="9 5.5"/><path d="M738.7 843.1 L743.7 848.1 L738.7 853.1 L733.7 848.1 Z" fill="#e15c66"/><path d="M857 864.5 L862 869.5 L857 874.5 L852 869.5 Z" fill="#e15c66"/><path d="M975.5 864.5 L980.5 869.5 L975.5 874.5 L970.5 869.5 Z" fill="#e15c66"/><path d="M1093.7 853.8 L1098.7 858.8 L1093.7 863.8 L1088.7 858.8 Z" fill="#e15c66"/><path d="M1211 832.7 L1216 837.7 L1211 842.7 L1206 837.7 Z" fill="#e15c66"/><path d="M857 755.5 L975.5 683.8 L1093.7 782.5 L1211 849.6 L1329.5 680.7" fill="none" stroke="#2f7fd1" stroke-width="2.5"/><circle cx="857" cy="755.5" r="4.6" fill="#2f7fd1"/><circle cx="975.5" cy="683.8" r="4.6" fill="#2f7fd1"/><circle cx="1093.7" cy="782.5" r="4.6" fill="#2f7fd1"/><circle cx="1211" cy="849.6" r="4.6" fill="#2f7fd1"/></svg>
<div class="t" style="left:620px;width:45.5px;text-align:right;top:660.2px;font-size:12px;color:#444">48.0</div>
<div class="t" style="left:620px;width:45.5px;text-align:right;top:714.4px;font-size:12px;color:#444">36.0</div>
<div class="t" style="left:620px;width:45.5px;text-align:right;top:768.5px;font-size:12px;color:#444">24.0</div>
<div class="t" style="left:620px;width:45.5px;text-align:right;top:822.6px;font-size:12px;color:#444">12.0</div>
<div class="t" style="left:620px;width:45.5px;text-align:right;top:875.4px;font-size:12px;color:#444">0.0</div>
<div class="t" style="left:570px;top:766.5px;width:90px;text-align:center;font-size:13.6px;font-weight:700;color:#444;transform:rotate(-90deg);transform-origin:45px 6.5px">Duration Days</div>
<div class="a" style="left:0.5px;top:82.5px;width:23px;height:23px;border-radius:50%;background:#fff;box-shadow:0 1px 3px rgba(0,0,0,0.2)"></div>
<svg class="a" style="left:0;top:82px" width="24" height="24" viewBox="0 0 24 24"><path d="M9.4 7.6 L14 12 L9.4 16.4" fill="none" stroke="#111" stroke-width="2"/></svg>
</body></html>
